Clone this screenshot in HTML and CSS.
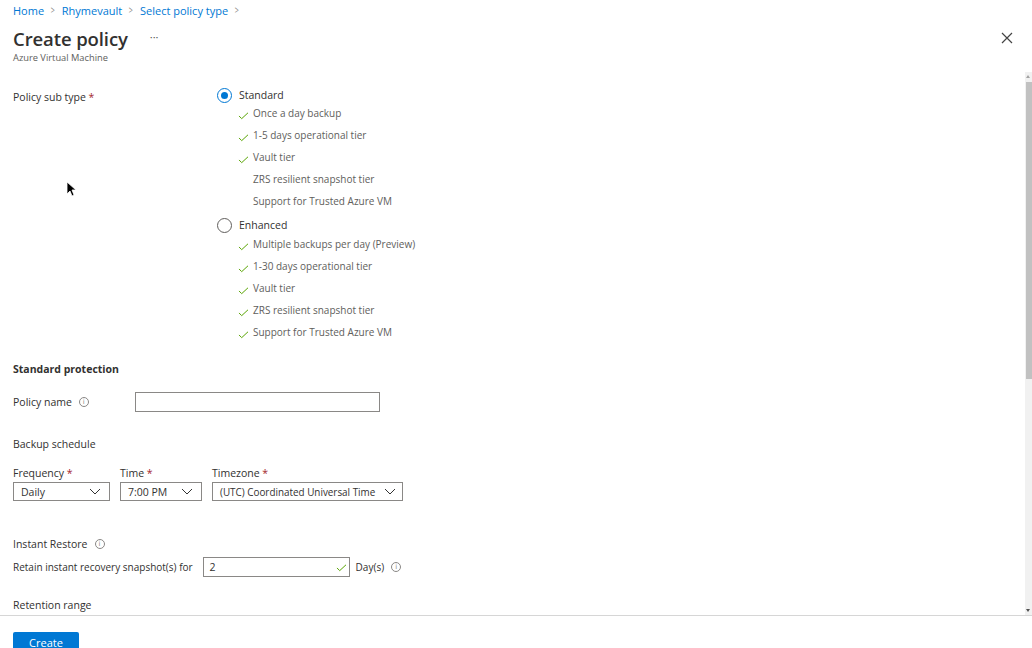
FILE: index.html
```html
<!DOCTYPE html>
<html>
<head>
<meta charset="utf-8">
<link rel="stylesheet" href="styles.css">
</head>
<body>
<div class="page">
  <header class="head">
    <nav class="crumbs">
      <a>Home</a><span class="sep">&gt;</span><a>Rhymevault</a><span class="sep">&gt;</span><a>Select policy type</a><span class="sep">&gt;</span>
    </nav>
    <div class="title-row">
      <h1>Create policy</h1>
      <span class="more">···</span>
      <svg class="close" width="12" height="12" viewBox="0 0 12 12"><path d="M1 1L11 11M11 1L1 11" stroke="#444" stroke-width="1.2" fill="none"/></svg>
    </div>
    <div class="subtitle">Azure Virtual Machine</div>
  </header>

  <div class="body">
    <main class="content">
      <section class="subtype">
        <div class="label">Policy sub type <span class="req">*</span></div>
        <div class="options">
          <div class="radio-row"><span class="radio on"></span>Standard</div>
          <ul class="checks">
            <li><svg class="ck" viewBox="0 0 12 10"><path d="M1 5.5L4 8.5L11 2" stroke="#57a300" stroke-width="1.1" fill="none"/></svg>Once a day backup</li>
            <li><svg class="ck" viewBox="0 0 12 10"><path d="M1 5.5L4 8.5L11 2" stroke="#57a300" stroke-width="1.1" fill="none"/></svg>1-5 days operational tier</li>
            <li><svg class="ck" viewBox="0 0 12 10"><path d="M1 5.5L4 8.5L11 2" stroke="#57a300" stroke-width="1.1" fill="none"/></svg>Vault tier</li>
            <li><span class="ck"></span>ZRS resilient snapshot tier</li>
            <li><span class="ck"></span>Support for Trusted Azure VM</li>
          </ul>
          <div class="radio-row"><span class="radio"></span>Enhanced</div>
          <ul class="checks second">
            <li><svg class="ck" viewBox="0 0 12 10"><path d="M1 5.5L4 8.5L11 2" stroke="#57a300" stroke-width="1.1" fill="none"/></svg>Multiple backups per day (Preview)</li>
            <li><svg class="ck" viewBox="0 0 12 10"><path d="M1 5.5L4 8.5L11 2" stroke="#57a300" stroke-width="1.1" fill="none"/></svg>1-30 days operational tier</li>
            <li><svg class="ck" viewBox="0 0 12 10"><path d="M1 5.5L4 8.5L11 2" stroke="#57a300" stroke-width="1.1" fill="none"/></svg>Vault tier</li>
            <li><svg class="ck" viewBox="0 0 12 10"><path d="M1 5.5L4 8.5L11 2" stroke="#57a300" stroke-width="1.1" fill="none"/></svg>ZRS resilient snapshot tier</li>
            <li><svg class="ck" viewBox="0 0 12 10"><path d="M1 5.5L4 8.5L11 2" stroke="#57a300" stroke-width="1.1" fill="none"/></svg>Support for Trusted Azure VM</li>
          </ul>
        </div>
      </section>

      <h2 class="section">Standard protection</h2>

      <div class="name-row">
        <div class="label inline">Policy name <span class="info">i</span></div>
        <div class="textbox name"></div>
      </div>

      <div class="group-title">Backup schedule</div>

      <div class="schedule">
        <div class="field">
          <div class="flabel">Frequency <span class="req">*</span></div>
          <div class="select w-freq"><span>Daily</span><svg class="chev" viewBox="0 0 12 7"><path d="M1 1L6 6L11 1" stroke="#333" stroke-width="1" fill="none"/></svg></div>
        </div>
        <div class="field">
          <div class="flabel">Time <span class="req">*</span></div>
          <div class="select w-time"><span>7:00 PM</span><svg class="chev" viewBox="0 0 12 7"><path d="M1 1L6 6L11 1" stroke="#333" stroke-width="1" fill="none"/></svg></div>
        </div>
        <div class="field">
          <div class="flabel">Timezone <span class="req">*</span></div>
          <div class="select w-tz"><span>(UTC) Coordinated Universal Time</span><svg class="chev" viewBox="0 0 12 7"><path d="M1 1L6 6L11 1" stroke="#333" stroke-width="1" fill="none"/></svg></div>
        </div>
      </div>

      <div class="group-title ir">Instant Restore <span class="info">i</span></div>
      <div class="retain-row">
        <span class="retain-label">Retain instant recovery snapshot(s) for</span>
        <div class="textbox retain"><span>2</span><svg class="ck2" viewBox="0 0 12 10"><path d="M1 5.5L4 8.5L11 2" stroke="#57a300" stroke-width="1.1" fill="none"/></svg></div>
        <span class="days">Day(s)</span><span class="info">i</span>
      </div>

      <div class="group-title rr">Retention range</div>
    </main>
    <div class="scrollbar">
      <div class="arrow up"></div>
      <div class="thumb"></div>
      <div class="arrow down"></div>
    </div>
  </div>

  <footer class="foot">
    <button class="btn">Create</button>
  </footer>

  <svg class="cursor" width="10" height="16" viewBox="0 0 10 16"><path d="M1 1L1 13L4 10L6 15L8 14L6 9L10 9Z" fill="#000" stroke="#fff" stroke-width="0.8"/></svg>
</div>
</body>
</html>
```

FILE: styles.css
```css
* { box-sizing: border-box; }
html, body { margin: 0; padding: 0; }
body {
  font-family: "Open Sans", "Noto Sans", sans-serif;
  font-size: 10.5px;
  color: #323130;
  background: #fff;
  width: 1032px;
  height: 648px;
  overflow: hidden;
}
.page {
  position: relative;
  width: 1032px;
  height: 648px;
  display: flex;
  flex-direction: column;
}
.head {
  padding: 2px 0 0 13px;
  height: 72px;
  flex: none;
}
.crumbs {
  font-size: 11px;
  color: #0078d4;
  display: flex;
  align-items: center;
  height: 16px;
}
.crumbs a { color: #0078d4; }
.crumbs .sep {
  color: #8a8886;
  margin: 0 6px;
  font-size: 10px;
  transform: scaleX(0.7);
  display: inline-block;
}
.title-row {
  display: flex;
  align-items: center;
  height: 26px;
  margin-top: 7px;
}
h1 {
  margin: 0;
  font-size: 18.5px;
  font-weight: 600;
  color: #323130;
  letter-spacing: -0.1px;
}
.more {
  margin-left: 22px;
  font-size: 11px;
  color: #555;
  margin-top: -3px;
}
.close {
  margin-left: auto;
  margin-right: 19px;
}
.subtitle {
  font-size: 9.3px;
  color: #605e5c;
}
.body {
  flex: 1;
  display: flex;
  min-height: 0;
  border-bottom: 1px solid #d6d6d6;
}
.content {
  flex: 1;
  padding: 14px 0 0 13px;
  overflow: hidden;
}
.scrollbar {
  width: 7px;
  background: #f1f1f1;
  display: flex;
  flex-direction: column;
}
.arrow { height: 9px; flex: none; position: relative; }
.arrow.up::after, .arrow.down::after {
  content: "";
  position: absolute;
  left: 1px;
  border-left: 2.5px solid transparent;
  border-right: 2.5px solid transparent;
}
.arrow.up::after { top: 3px; border-bottom: 3px solid #a3a3a3; }
.arrow.down::after { bottom: 3px; border-top: 3px solid #505050; }
.thumb {
  height: 297px;
  background: #c1c1c1;
  margin: 1px 0 0 1px;
}
.scrollbar .arrow.down { margin-top: auto; }

.subtype { display: flex; }
.label {
  width: 204px;
  flex: none;
  font-size: 10.5px;
  padding-top: 4px;
}
.req { color: #a4262c; }
.options { padding-top: 1px; }
.radio-row {
  display: flex;
  align-items: center;
  height: 16px;
  font-size: 10.5px;
}
.radio {
  width: 15px;
  height: 15px;
  border: 1px solid #605e5c;
  border-radius: 50%;
  margin-right: 7px;
  position: relative;
  flex: none;
}
.radio.on { border-color: #0078d4; }
.radio.on::after {
  content: "";
  position: absolute;
  left: 3px; top: 3px;
  width: 7px; height: 7px;
  border-radius: 50%;
  background: #0078d4;
}
.checks {
  list-style: none;
  margin: 3px 0 1px 21px;
  padding: 0;
}
.checks.second { margin-top: 4px; }
.checks li {
  height: 22px;
  display: flex;
  align-items: flex-start;
  color: #605e5c;
  font-size: 10px;
}
.ck {
  width: 11px;
  height: 9px;
  margin: 5px 4px 0 0;
  flex: none;
  display: inline-block;
}
.section {
  margin: 14px 0 0;
  font-size: 10.5px;
  font-weight: 700;
  color: #323130;
}
.name-row {
  display: flex;
  align-items: center;
  margin-top: 16px;
}
.label.inline {
  width: 122px;
  padding-top: 0;
  display: flex;
  align-items: center;
}
.info {
  display: inline-flex;
  align-items: center;
  justify-content: center;
  width: 10px;
  height: 10px;
  border: 1px solid #8a8886;
  border-radius: 50%;
  font-size: 7px;
  color: #8a8886;
  margin-left: 7px;
  line-height: 1;
  font-family: "DejaVu Sans", sans-serif;
}
.textbox {
  border: 1px solid #8a8886;
  height: 20px;
  background: #fff;
}
.textbox.name { width: 245px; }
.group-title {
  margin-top: 25px;
  font-size: 10.5px;
  display: flex;
  align-items: center;
}
.schedule {
  display: flex;
  gap: 10px;
  margin-top: 15px;
}
.flabel {
  font-size: 10.5px;
  height: 16px;
}
.select {
  border: 1px solid #8a8886;
  height: 19px;
  display: flex;
  align-items: center;
  padding: 0 8px 0 7px;
  font-size: 10.5px;
  justify-content: space-between;
  white-space: nowrap;
}
.w-freq { width: 97px; }
.w-time { width: 82px; }
.w-tz { width: 191px; padding-right: 6px; font-size: 9.9px; }
.chev { width: 12px; height: 7px; flex: none; }
.group-title.ir { margin-top: 36px; }
.retain-row {
  display: flex;
  align-items: center;
  margin-top: 6px;
}
.retain-label { font-size: 10px; }
.textbox.retain {
  width: 147px;
  height: 20px;
  margin: 0 6px 0 10px;
  display: flex;
  align-items: center;
  justify-content: space-between;
  padding: 0 2px 0 6px;
}
.days { font-size: 10px; }
.ck2 { width: 11px; height: 9px; }
.group-title.rr { margin-top: 21px; }
.foot {
  height: 32px;
  flex: none;
  padding: 16px 0 0 13px;
}
.btn {
  width: 66px;
  height: 20px;
  background: #0078d4;
  color: #fff;
  border: none;
  border-radius: 2px;
  font-family: inherit;
  font-size: 11px;
  padding: 0;
  display: block;
}
.cursor {
  position: absolute;
  left: 66px;
  top: 181px;
}
```
